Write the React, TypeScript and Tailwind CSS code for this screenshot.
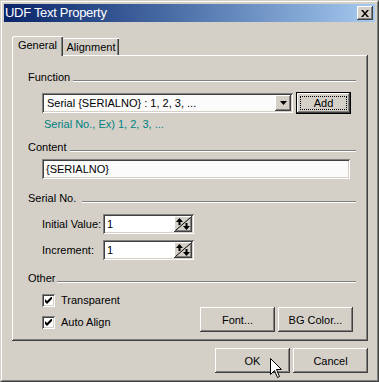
import React from "react";

const raised =
  "shadow-[inset_-1px_-1px_0_#404040,inset_1px_1px_0_#ffffff,inset_-2px_-2px_0_#808080,inset_2px_2px_0_#d4d0c8]";
const sunken =
  "shadow-[inset_1px_1px_0_#808080,inset_-1px_-1px_0_#ffffff,inset_2px_2px_0_#404040,inset_-2px_-2px_0_#d4d0c8]";

function GroupHeader({ label, lineClass }: { label: string; lineClass: string }) {
  return (
    <div className="flex items-center h-[14px]">
      <span>{label}</span>
      <div className={lineClass} />
    </div>
  );
}

function Spinner() {
  return (
    <div className={`w-[18px] h-[16px] bg-[#d4d0c8] ${raised}`}>
      <svg width="18" height="16" viewBox="0 0 18 16">
        <line x1="1.5" y1="14.5" x2="16.5" y2="1.5" stroke="#000" strokeWidth="1" />
        <path d="M5.5 2 L2 6 L9 6 Z" fill="#000" />
        <rect x="4.5" y="6" width="2" height="3" fill="#000" />
        <rect x="11.5" y="7" width="2" height="3" fill="#000" />
        <path d="M9 10 L16 10 L12.5 14 Z" fill="#000" />
      </svg>
    </div>
  );
}

function SpinField({ label }: { label: string }) {
  return (
    <div className="flex items-center ml-[14px]">
      <span className="w-[61px]">{label}</span>
      <div className={`w-[91px] h-[20px] bg-white flex items-center p-[2px] ${sunken}`}>
        <span className="flex-1 pl-[2px]">1</span>
        <Spinner />
      </div>
    </div>
  );
}

function Check({ label }: { label: string }) {
  return (
    <div className="flex items-center h-[14px] ml-[14px]">
      <div className={`w-[13px] h-[13px] bg-white ${sunken} flex items-center justify-center`}>
        <svg width="7" height="7" viewBox="0 0 7 7">
          <path d="M0 2 L0 5 L2 7 L7 2 L7 -1 L2 4 Z" fill="#000" />
        </svg>
      </div>
      <span className="ml-[6px]">{label}</span>
    </div>
  );
}

function Button({ label, w }: { label: string; w: string }) {
  return (
    <div className={`${w} h-[25px] bg-[#d4d0c8] ${raised} flex items-center justify-center`}>
      {label}
    </div>
  );
}

export default function App() {
  return (
    <div className="relative w-[379px] h-[382px] bg-[#d4d0c8] text-black text-[11px] leading-[14px] [font-family:'Liberation_Sans',Arial,sans-serif] border border-t-[#d4d0c8] border-l-[#d4d0c8] border-r-[#404040] border-b-[#404040]">
      <div className="h-full border border-t-white border-l-white border-r-[#808080] border-b-[#808080] p-[2px]">
        {/* title bar */}
        <div className="h-[18px] flex items-center justify-between bg-gradient-to-r from-[#0a246a] to-[#a6caf0] pl-[1px] pr-[2px]">
          <span className="text-white text-[13px] tracking-[-0.3px]">UDF Text Property</span>
          <div className={`w-[16px] h-[14px] bg-[#d4d0c8] ${raised} flex items-center justify-center`}>
            <svg width="8" height="7" viewBox="0 0 8 7">
              <path d="M0 0 L2 0 L4 2.5 L6 0 L8 0 L5 3.5 L8 7 L6 7 L4 4.5 L2 7 L0 7 L3 3.5 Z" fill="#000" />
            </svg>
          </div>
        </div>

        {/* tabs */}
        <div className="ml-[8px] mt-[14px] flex items-end h-[19px]">
          <div className="relative z-10 h-[20px] mb-[-1px] w-[51px] bg-[#d4d0c8] rounded-tl-[2px] shadow-[inset_1px_1px_0_#ffffff,inset_-1px_0_0_#404040,inset_-2px_0_0_#808080] flex items-start justify-center pt-[2px]">
            General
          </div>
          <div className="h-[17px] w-[56px] rounded-tl-[1px] shadow-[inset_0_1px_0_#ffffff,inset_-1px_0_0_#404040,inset_-2px_0_0_#808080] flex items-start justify-center pt-[2px]">
            Alignment
          </div>
        </div>

        {/* panel */}
        <div className={`ml-[8px] w-[356px] h-[286px] ${raised} pl-[16px] pr-[12px] pt-[15px]`}>
          <GroupHeader
            label="Function"
            lineClass="flex-1 h-[2px] mt-[8px] ml-[3px] border-t border-t-[#808080] border-b border-b-white"
          />
          <div className="flex items-center mt-[8px] ml-[14px]">
            <div className={`w-[251px] h-[20px] bg-[#fbfbfb] flex items-center p-[2px] ${sunken}`}>
              <span className="flex-1 pl-[3px]">Serial {"{SERIALNO}"} : 1, 2, 3, ...</span>
              <div className={`w-[16px] h-[16px] bg-[#d4d0c8] ${raised} flex items-center justify-center`}>
                <svg width="7" height="4" viewBox="0 0 7 4">
                  <path d="M0 0 L7 0 L3.5 4 Z" fill="#000" />
                </svg>
              </div>
            </div>
            <div className="ml-[3px] w-[55px] h-[22px] border border-black bg-[#d4d0c8]">
              <div className={`w-full h-full ${raised} p-[3px]`}>
                <div className="w-full h-full border border-dotted border-black flex items-center justify-center">
                  Add
                </div>
              </div>
            </div>
          </div>
          <div className="mt-[3px] ml-[16px] text-[#008080]">Serial No., Ex) 1, 2, 3, ...</div>

          <div className="mt-[9px]">
            <GroupHeader
              label="Content"
              lineClass="flex-1 h-[2px] mt-[8px] ml-[3px] border-t border-t-[#808080] border-b border-b-white"
            />
          </div>
          <div className={`mt-[5px] ml-[14px] w-[308px] h-[20px] bg-[#fbfbfb] flex items-center pl-[4px] ${sunken}`}>
            {"{SERIALNO}"}
          </div>

          <div className="mt-[12px]">
            <GroupHeader
              label="Serial No."
              lineClass="flex-1 h-[2px] mt-[8px] ml-[6px] border-t border-t-[#808080] border-b border-b-white"
            />
          </div>
          <div className="mt-[9px]">
            <SpinField label="Initial Value:" />
          </div>
          <div className="mt-[6px]">
            <SpinField label="Increment:" />
          </div>

          <div className="mt-[11px]">
            <GroupHeader
              label="Other"
              lineClass="flex-1 h-[2px] mt-[8px] ml-[1px] border-t border-t-[#808080] border-b border-b-white"
            />
          </div>
          <div className="mt-[8px] flex justify-between items-start">
            <div className="flex flex-col gap-[8px]">
              <Check label="Transparent" />
              <Check label="Auto Align" />
            </div>
            <div className="mt-[14px] mr-[3px] flex gap-[3px]">
              <Button label="Font..." w="w-[75px]" />
              <Button label="BG Color..." w="w-[75px]" />
            </div>
          </div>
        </div>

        {/* dialog buttons */}
        <div className="ml-[8px] w-[356px] mt-[7px] flex justify-end gap-[3px]">
          <Button label="OK" w="w-[75px]" />
          <Button label="Cancel" w="w-[75px]" />
        </div>
      </div>

      {/* mouse pointer */}
      <svg className="absolute left-[269px] top-[357px]" width="12" height="21" viewBox="0 0 12 21">
        <path
          d="M0.5 0.5 L0.5 16.5 L4.5 12.5 L7.5 19.5 L9.5 18.5 L6.5 11.5 L11.5 11.5 Z"
          fill="#fff"
          stroke="#000"
          strokeWidth="1"
        />
      </svg>
    </div>
  );
}
